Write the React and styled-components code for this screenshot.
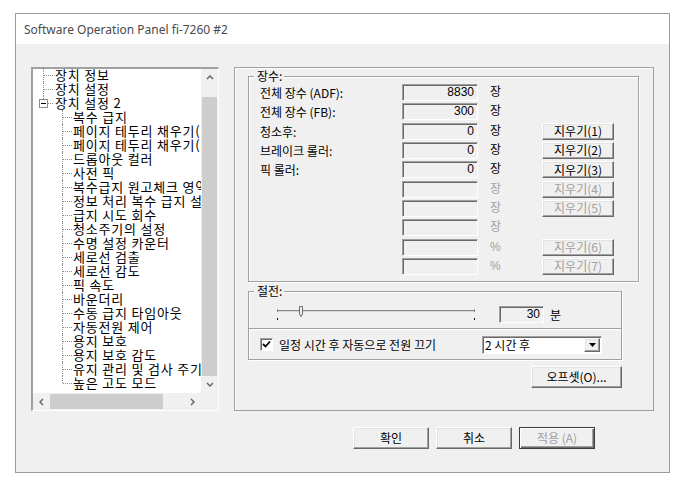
import React from 'react';
import styled, { createGlobalStyle, css } from 'styled-components';

const KR = '"Noto Sans CJK KR", "Noto Sans", sans-serif';

const GlobalStyle = createGlobalStyle`
  html, body {
    margin: 0;
    padding: 0;
    background: #ffffff;
  }
  body {
    width: 684px;
    height: 486px;
    overflow: hidden;
    font-family: ${KR};
    font-size: 12px;
    color: #000;
  }
  * {
    box-sizing: border-box;
  }
`;

const raised = css`
  background: #f0f0f0;
  border-style: solid;
  border-width: 1px;
  border-color: #ffffff #696969 #696969 #ffffff;
  box-shadow: inset -1px -1px 0 #a0a0a0, inset 1px 1px 0 #e3e3e3;
`;

const sunken = css`
  border-style: solid;
  border-width: 1px;
  border-color: #a0a0a0 #ffffff #ffffff #a0a0a0;
  box-shadow: inset 1px 1px 0 #696969;
`;

const Window = styled.div`
  margin: 13px 0 0 15px;
  width: 655px;
  height: 460px;
  border: 1px solid #9b9b9b;
  display: flex;
  flex-direction: column;
  background: #f0f0f0;
`;

const TitleBar = styled.div`
  height: 30px;
  background: #ffffff;
  padding-left: 8px;
  display: flex;
  align-items: center;
  font-family: "Noto Sans", sans-serif;
  font-size: 12px;
  color: #4a4a4a;
`;

const Body = styled.div`
  flex: 1;
  padding: 23px 15px 0 15px;
  display: flex;
  flex-direction: column;
`;

const Main = styled.div`
  display: flex;
  gap: 15px;
  height: 344px;
`;

/* ---------- tree ---------- */

const Tree = styled.div`
  width: 188px;
  height: 344px;
  border-style: solid;
  border-width: 2px 1px 1px 2px;
  border-color: #a0a0a0 #ffffff #ffffff #a0a0a0;
  background: #ffffff;
  display: grid;
  grid-template-columns: 1fr 17px;
  grid-template-rows: 1fr 17px;
`;

const TreeList = styled.div`
  overflow: hidden;
  margin-top: -1px;
`;

const TreeRow = styled.div`
  position: relative;
  height: 14px;
  line-height: 14px;
  padding-left: ${(p) => (p.$level === 1 ? 22 : 40)}px;
  white-space: nowrap;
  font-size: 13px;
  letter-spacing: 0.8px;

  &::before {
    content: '';
    position: absolute;
    left: ${(p) => (p.$level === 1 ? 10 : 29)}px;
    top: 0;
    height: ${(p) => (p.$last ? 7 : 14)}px;
    border-left: 1px dotted #8c8c8c;
  }

  &::after {
    content: '';
    position: absolute;
    left: ${(p) => (p.$level === 1 ? 11 : 30)}px;
    top: 7px;
    width: 9px;
    border-top: 1px dotted #8c8c8c;
  }
`;

const Expander = styled.span`
  position: absolute;
  left: 6px;
  top: 3px;
  width: 9px;
  height: 9px;
  border: 1px solid #8c8c8c;
  background: #ffffff;
  z-index: 1;

  &::after {
    content: '';
    position: absolute;
    left: 1px;
    top: 3px;
    width: 5px;
    border-top: 1px solid #000;
  }
`;

const Corner = styled.div`
  background: #f0f0f0;
`;

const VScroll = styled.div`
  background: #f0f0f0;
  display: flex;
  flex-direction: column;
`;

const HScroll = styled.div`
  background: #f0f0f0;
  display: flex;
`;

const ScrollArrow = styled.div`
  width: 17px;
  height: 17px;
  flex-shrink: 0;
  display: flex;
  align-items: center;
  justify-content: center;
`;

const VThumb = styled.div`
  flex: 1;
  margin: 11px 1px 0;
  background: #cdcdcd;
`;

const HThumb = styled.div`
  width: 113px;
  margin: 1px 0;
  background: #cdcdcd;
`;

const HTrack = styled.div`
  flex: 1;
`;

/* ---------- right panel ---------- */

const Panel = styled.div`
  width: 420px;
  height: 344px;
  border: 1px solid #a0a0a0;
  box-shadow: inset 1px 1px 0 #ffffff;
  padding: 8px 14px 0 13px;
  display: flex;
  flex-direction: column;
`;

const Group = styled.div`
  position: relative;
  width: ${(p) => p.$width}px;
  height: ${(p) => p.$height}px;
  margin-top: ${(p) => p.$top || 0}px;
  border: 1px solid #a0a0a0;
  box-shadow: 1px 1px 0 #ffffff, inset 1px 1px 0 #ffffff;
`;

const Legend = styled.span`
  position: absolute;
  top: -8px;
  left: 5px;
  padding: 0 2px 0 3px;
  background: #f0f0f0;
  line-height: 14px;
`;

const CounterGrid = styled.div`
  display: grid;
  grid-template-columns: 142px 76px 64px 72px;
  grid-auto-rows: 19.33px;
  padding: 7px 0 0 11px;
  align-items: start;
`;

const Label = styled.span`
  line-height: 17px;
  white-space: nowrap;
`;

const Field = styled.div`
  height: 17px;
  width: ${(p) => p.$width || 76}px;
  ${sunken};
  background: #f0f0f0;
  text-align: right;
  padding-right: 3px;
  line-height: 15px;
  font-family: "Liberation Sans", ${KR};
  font-size: 12px;
`;

const Unit = styled.span`
  padding-left: 12px;
  line-height: 17px;
  color: ${(p) => (p.$disabled ? '#a0a0a0' : '#000')};
  font-family: "Liberation Sans", ${KR};
`;

const Button = styled.button`
  ${raised};
  width: ${(p) => p.$width}px;
  height: ${(p) => p.$height}px;
  padding: 0;
  font-family: ${KR};
  font-size: 12px;
  line-height: 1;
  color: ${(p) => (p.disabled ? '#a0a0a0' : '#000')};
  cursor: default;

  ${(p) =>
    p.$default &&
    css`
      border: 1px solid #3c3c3c;
      box-shadow: inset 1px 1px 0 #ffffff, inset -1px -1px 0 #696969, inset -2px -2px 0 #a0a0a0;
    `}
`;

const SliderRow = styled.div`
  height: 36px;
  display: flex;
  align-items: flex-start;
  padding: 14px 0 0 28px;
`;

const MinuteField = styled(Field)`
  margin-left: 23px;
`;

const MinuteUnit = styled.span`
  margin-left: 6px;
  line-height: 17px;
`;

const Divider = styled.div`
  height: 2px;
  border-top: 1px solid #a0a0a0;
  border-bottom: 1px solid #ffffff;
`;

const CheckRow = styled.div`
  height: 29px;
  display: flex;
  align-items: center;
  padding: 0 19px 0 11px;
`;

const CheckBox = styled.span`
  width: 13px;
  height: 13px;
  ${sunken};
  background: #ffffff;
  display: flex;
  align-items: center;
  justify-content: center;
`;

const CheckLabel = styled.span`
  margin-left: 6px;
  line-height: 14px;
`;

const Combo = styled.div`
  margin-left: auto;
  width: 120px;
  height: 18px;
  ${sunken};
  background: #ffffff;
  display: flex;
  align-items: center;
  padding-left: 2px;
`;

const ComboText = styled.span`
  flex: 1;
  line-height: 14px;
`;

const ComboButton = styled.span`
  ${raised};
  width: 16px;
  height: 14px;
  margin-right: 1px;
  display: flex;
  align-items: center;
  justify-content: center;
`;

const OffsetRow = styled.div`
  width: 374px;
  margin-top: 6px;
  display: flex;
  justify-content: flex-end;
`;

const Footer = styled.div`
  margin-top: 16px;
  display: flex;
  justify-content: flex-end;
  gap: 7px;
  padding-right: 59px;
`;

/* ---------- data ---------- */

const treeItems = [
  { level: 1, text: '장치 정보' },
  { level: 1, text: '장치 설정' },
  { level: 1, text: '장치 설정 2', last: true, expanded: true },
  { level: 2, text: '복수 급지' },
  { level: 2, text: '페이지 테두리 채우기(스캐너)' },
  { level: 2, text: '페이지 테두리 채우기(드라이버)' },
  { level: 2, text: '드롭아웃 컬러' },
  { level: 2, text: '사전 픽' },
  { level: 2, text: '복수급지 원고체크 영역' },
  { level: 2, text: '정보 처리 복수 급지 설정' },
  { level: 2, text: '급지 시도 회수' },
  { level: 2, text: '청소주기의 설정' },
  { level: 2, text: '수명 설정 카운터' },
  { level: 2, text: '세로선 검출' },
  { level: 2, text: '세로선 감도' },
  { level: 2, text: '픽 속도' },
  { level: 2, text: '바운더리' },
  { level: 2, text: '수동 급지 타임아웃' },
  { level: 2, text: '자동전원 제어' },
  { level: 2, text: '용지 보호' },
  { level: 2, text: '용지 보호 감도' },
  { level: 2, text: '유지 관리 및 검사 주기' },
  { level: 2, text: '높은 고도 모드', last: true },
];

const counters = [
  { label: '전체 장수 (ADF):', value: '8830', unit: '장' },
  { label: '전체 장수 (FB):', value: '300', unit: '장' },
  { label: '청소후:', value: '0', unit: '장', button: '지우기(1)' },
  { label: '브레이크 롤러:', value: '0', unit: '장', button: '지우기(2)' },
  { label: '픽 롤러:', value: '0', unit: '장', button: '지우기(3)' },
  { label: '', value: '', unit: '장', off: true, button: '지우기(4)' },
  { label: '', value: '', unit: '장', off: true, button: '지우기(5)' },
  { label: '', value: '', unit: '장', off: true },
  { label: '', value: '', unit: '%', off: true, button: '지우기(6)' },
  { label: '', value: '', unit: '%', off: true, button: '지우기(7)' },
];

const Chevron = ({ dir }) => {
  const pts = {
    up: '1,5 4,2 7,5',
    down: '1,2 4,5 7,2',
    left: '5,1 2,4 5,7',
    right: '2,1 5,4 2,7',
  }[dir];
  return (
    <svg width="8" height="8" viewBox="0 0 8 8">
      <polyline points={pts} fill="none" stroke="#606060" strokeWidth="1.4" />
    </svg>
  );
};

const Slider = () => (
  <svg width="199" height="16" viewBox="0 0 199 16">
    <line x1="0" y1="4.5" x2="198" y2="4.5" stroke="#8a8a8a" />
    <line x1="0" y1="5.5" x2="198" y2="5.5" stroke="#d8d8d8" />
    <line x1="0.5" y1="3" x2="0.5" y2="6" stroke="#8a8a8a" />
    <line x1="197.5" y1="3" x2="197.5" y2="6" stroke="#8a8a8a" />
    <path d="M22.5 0.5 H25.5 V8 L24 10.5 L22.5 8 Z" fill="#f0f0f0" stroke="#6a6a6a" />
    <rect x="0" y="12" width="1" height="2" fill="#000" />
    <rect x="197" y="12" width="1" height="2" fill="#000" />
  </svg>
);

const App = () => (
  <>
    <GlobalStyle />
    <Window>
      <TitleBar>Software Operation Panel fi-7260 #2</TitleBar>
      <Body>
        <Main>
          <Tree>
            <TreeList>
              {treeItems.map((item, i) => (
                <TreeRow key={i} $level={item.level} $last={item.last}>
                  {item.expanded && <Expander />}
                  {item.text}
                </TreeRow>
              ))}
            </TreeList>
            <VScroll>
              <ScrollArrow>
                <Chevron dir="up" />
              </ScrollArrow>
              <VThumb />
              <ScrollArrow>
                <Chevron dir="down" />
              </ScrollArrow>
            </VScroll>
            <HScroll>
              <ScrollArrow>
                <Chevron dir="left" />
              </ScrollArrow>
              <HThumb />
              <HTrack />
              <ScrollArrow>
                <Chevron dir="right" />
              </ScrollArrow>
            </HScroll>
            <Corner />
          </Tree>

          <Panel>
            <Group $width={391} $height={206}>
              <Legend>장수:</Legend>
              <CounterGrid>
                {counters.map((c, i) => (
                  <React.Fragment key={i}>
                    <Label>{c.label}</Label>
                    <Field>{c.value}</Field>
                    <Unit $disabled={c.off}>{c.unit}</Unit>
                    {c.button ? (
                      <Button $width={72} $height={17} disabled={c.off}>
                        {c.button}
                      </Button>
                    ) : (
                      <span />
                    )}
                  </React.Fragment>
                ))}
              </CounterGrid>
            </Group>

            <Group $width={374} $height={69} $top={9}>
              <Legend>절전:</Legend>
              <SliderRow>
                <Slider />
                <MinuteField $width={45}>30</MinuteField>
                <MinuteUnit>분</MinuteUnit>
              </SliderRow>
              <Divider />
              <CheckRow>
                <CheckBox>
                  <svg width="9" height="9" viewBox="0 0 9 9">
                    <polyline points="1,4 3.5,6.5 8,1.5" fill="none" stroke="#000" strokeWidth="1.8" />
                  </svg>
                </CheckBox>
                <CheckLabel>일정 시간 후 자동으로 전원 끄기</CheckLabel>
                <Combo>
                  <ComboText>2 시간 후</ComboText>
                  <ComboButton>
                    <svg width="7" height="4" viewBox="0 0 7 4">
                      <polygon points="0,0 7,0 3.5,4" fill="#000" />
                    </svg>
                  </ComboButton>
                </Combo>
              </CheckRow>
            </Group>

            <OffsetRow>
              <Button $width={91} $height={22}>
                오프셋(O)...
              </Button>
            </OffsetRow>
          </Panel>
        </Main>

        <Footer>
          <Button $width={76} $height={22}>확인</Button>
          <Button $width={76} $height={22}>취소</Button>
          <Button $width={76} $height={22} disabled $default>
            적용 (A)
          </Button>
        </Footer>
      </Body>
    </Window>
  </>
);

export default App;
